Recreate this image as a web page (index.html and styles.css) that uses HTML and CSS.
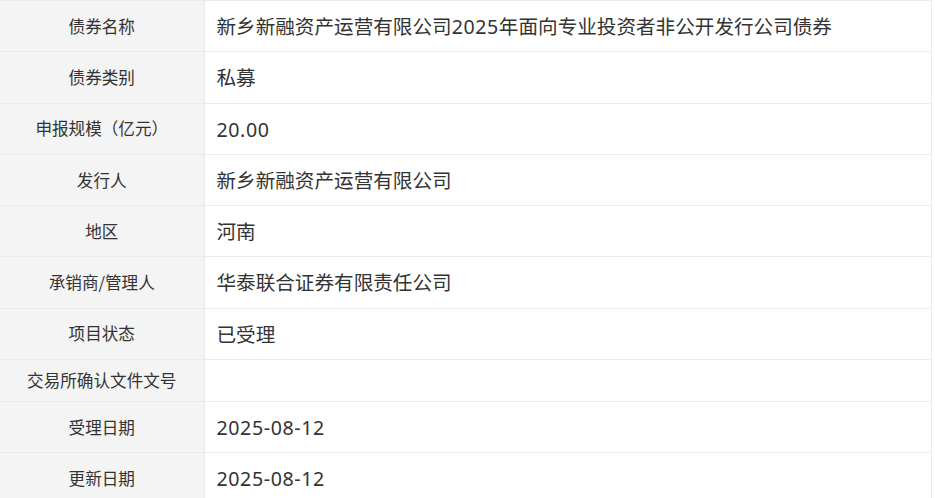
FILE: index.html
```html
<!DOCTYPE html>
<html lang="zh-CN">
<head>
<meta charset="utf-8">
<title>债券信息</title>
<link rel="stylesheet" href="styles.css">
</head>
<body>
<table class="info-table">
  <colgroup>
    <col class="col-label">
    <col class="col-value">
  </colgroup>
  <tbody>
    <tr><td class="label">债券名称</td><td class="value">新乡新融资产运营有限公司<span class="num">2025</span>年面向专业投资者非公开发行公司债券</td></tr>
    <tr><td class="label">债券类别</td><td class="value">私募</td></tr>
    <tr><td class="label">申报规模（亿元）</td><td class="value"><span class="num">20.00</span></td></tr>
    <tr><td class="label">发行人</td><td class="value">新乡新融资产运营有限公司</td></tr>
    <tr><td class="label">地区</td><td class="value">河南</td></tr>
    <tr><td class="label">承销商/管理人</td><td class="value">华泰联合证券有限责任公司</td></tr>
    <tr><td class="label">项目状态</td><td class="value">已受理</td></tr>
    <tr><td class="label">交易所确认文件文号</td><td class="value empty"></td></tr>
    <tr><td class="label">受理日期</td><td class="value"><span class="num">2025-08-12</span></td></tr>
    <tr><td class="label">更新日期</td><td class="value"><span class="num">2025-08-12</span></td></tr>
  </tbody>
</table>
</body>
</html>
```
FILE: styles.css
```css
html, body {
  margin: 0;
  padding: 0;
  background: #ffffff;
}

body {
  font-family: "Noto Sans CJK SC", "Noto Sans", sans-serif;
  color: #333333;
}

.info-table {
  width: 932px;
  border-collapse: collapse;
  table-layout: fixed;
}

.col-label {
  width: 204px;
}

.info-table td {
  border: 1px solid #ebebeb;
  padding: 10px 0;
  vertical-align: middle;
}

.info-table tr td:first-child {
  border-left: none;
}

.label {
  background: #f4f4f4;
  text-align: center;
  font-size: 16.6px;
  line-height: 21px;
  color: #333333;
}

.value {
  padding-left: 12px !important;
  font-size: 19.6px;
  line-height: 30.3px;
  color: #333333;
  white-space: nowrap;
}

.value.empty {
  line-height: 21px;
}

.num {
  font-family: "Noto Sans", "Noto Sans CJK SC", sans-serif;
  letter-spacing: 0.6px;
  line-height: 1;
}
```
